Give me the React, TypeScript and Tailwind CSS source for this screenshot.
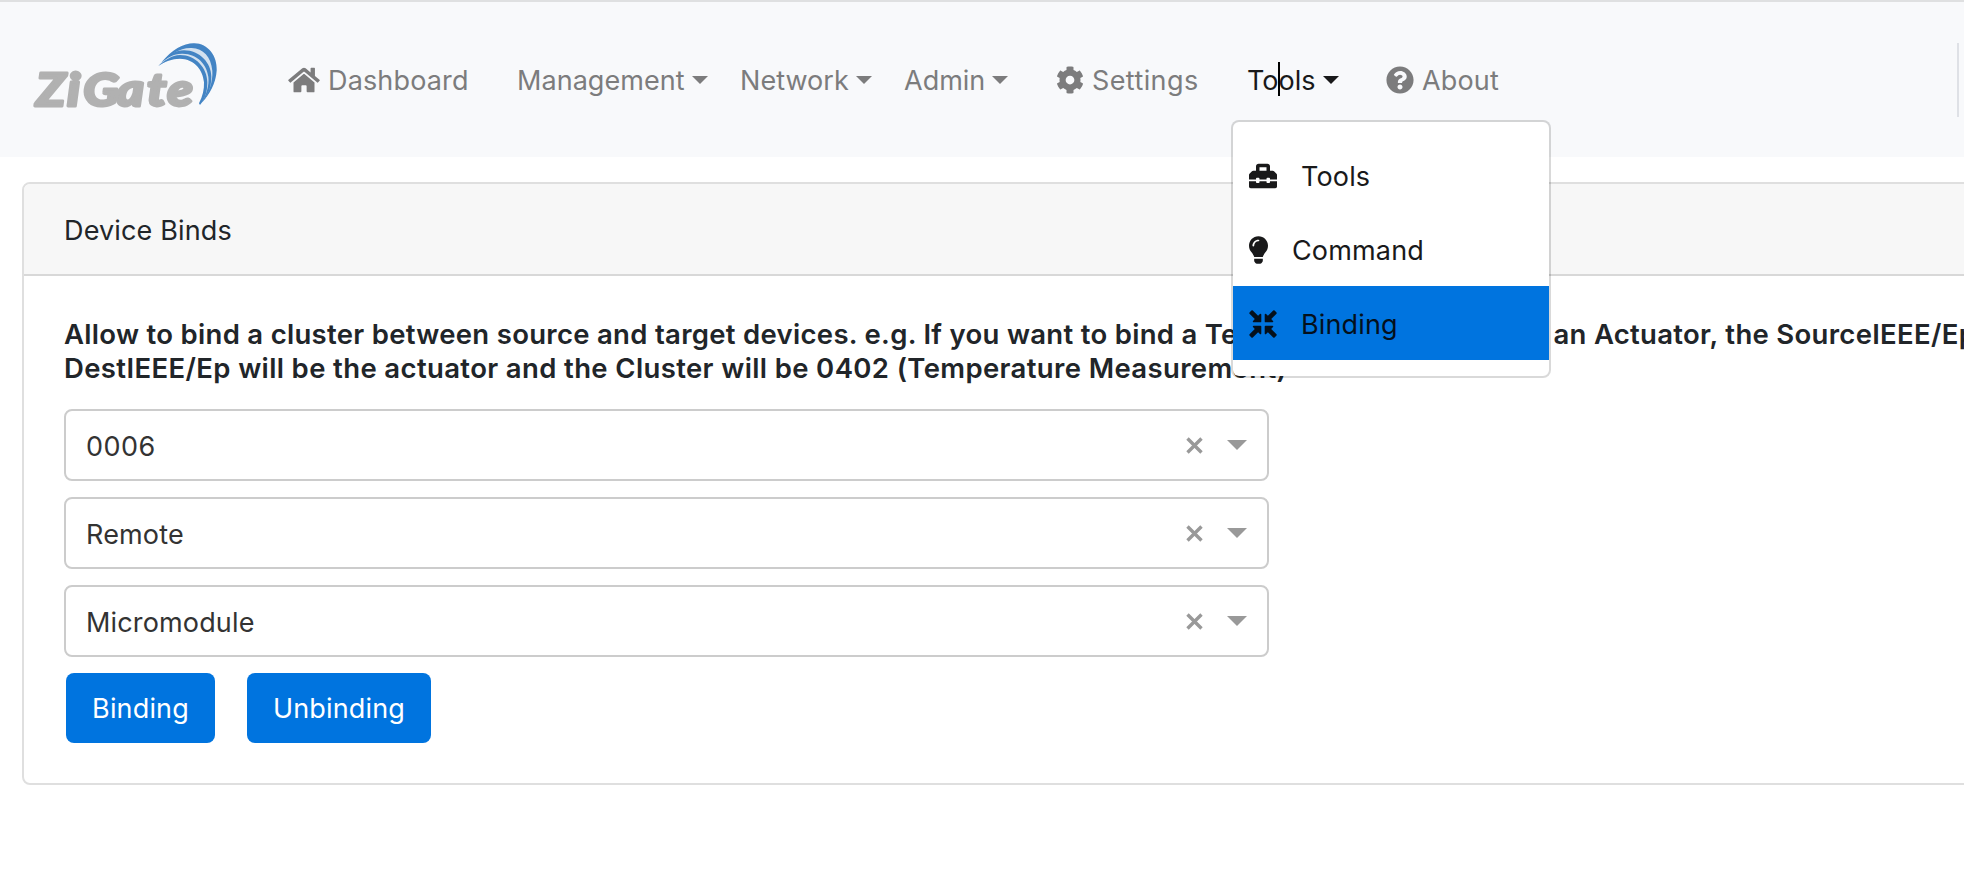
import type { ReactNode } from "react";
import { FaHome, FaCog, FaQuestionCircle, FaToolbox, FaLightbulb } from "react-icons/fa";

function Logo() {
  return (
    <svg className="mr-[66px] block h-[79px] w-[190px] shrink-0" viewBox="32 40 190 79">
      <text
        transform="scale(1.14 1)"
        x="31.6 58.8 73 102.3 129 146.8"
        y="106.5"
        fontSize="46"
        fontWeight="900"
        fontStyle="italic"
        fill="#b1b1b1"
        stroke="#b1b1b1"
        strokeWidth="2.8"
        strokeLinejoin="round"
        className="font-['Lato',sans-serif]"
      >
        ZiGate
      </text>
      <g transform="translate(30 35) scale(0.33333)" fill="#4384c4">
        <path
          opacity="0.2"
          d="M385 92C420 50 455 25 492 25C535 25 562 65 560 105C558 145 535 180 510 208C522 185 527 160 526 140C522 105 495 73 450 71C425 70 405 80 385 92Z"
        />
        <path d="M395 82C425 45 460 25 492 25C535 25 562 65 560 105C558 145 538 180 515 204C537 175 549 140 547 107C543 65 520 41 485 39C450 37 420 60 395 82Z" />
        <path d="M395 82C420 57 437 46 462 46C510 46 544 85 544 125C544 160 532 185 514 204C530 178 538 150 535 125C530 88 503 57 458 56C432 55 412 68 395 82Z" />
        <path d="M385 93C405 75 425 61 450 60C498 60 532 100 532 142C532 172 525 192 510 210L507 205C518 185 523 162 522 142C519 106 495 72 450 71C425 71 405 80 385 93Z" />
      </g>
    </svg>
  );
}

function Caret() {
  return (
    <span className="ml-[7px] mt-px h-0 w-0 shrink-0 border-x-[8px] border-t-[8px] border-x-transparent border-t-current" />
  );
}

function NavItem({ className = "", icon, label, caret }: { className?: string; icon?: ReactNode; label: string; caret?: boolean }) {
  return (
    <a className={`flex shrink-0 items-center whitespace-nowrap ${className}`}>
      {icon}
      <span className="mt-[2px]">{label}</span>
      {caret && <Caret />}
    </a>
  );
}

function MenuItem({ icon, label, className = "" }: { icon: ReactNode; label: string; className?: string }) {
  return (
    <a className={`flex h-[74px] items-center gap-6 pl-4 pt-[2px] ${className}`}>
      {icon}
      <span className="mt-[2px]">{label}</span>
    </a>
  );
}

function Select({ value, className = "" }: { value: string; className?: string }) {
  return (
    <div className="flex h-[72px] w-[1205px] items-center rounded-lg border-2 border-[#ccc] bg-white pl-5 pr-[20px] text-[#333]">
      <span className={`mt-[3px] grow ${className}`}>{value}</span>
      <svg className="mr-[24px] h-[17px] w-[17px]" viewBox="0 0 17 17" stroke="#999" strokeWidth="3.4">
        <path d="M1.5 1.5L15.5 15.5M15.5 1.5L1.5 15.5" />
      </svg>
      <span className="h-0 w-0 border-x-[10px] border-t-[10px] border-x-transparent border-t-[#999]" />
    </div>
  );
}

function CompressIcon() {
  return (
    <svg className="h-7 w-7 shrink-0" viewBox="0 0 28 28" fill="currentColor">
      {["rotate(0 14 14)", "rotate(90 14 14)", "rotate(180 14 14)", "rotate(270 14 14)"].map((turn) => (
        <g key={turn} transform={turn}>
          <path d="M12.3 4.6V11.4Q12.3 12.3 11.4 12.3H4.6Q3.2 12 4 10.9L5.8 9.1L0.5 3.8Q0 3.1 0.5 2.4L2.4 0.5Q3.1 0 3.8 0.5L9.1 5.8L10.9 4Q12 3.2 12.3 4.6Z" />
        </g>
      ))}
    </svg>
  );
}

export default function App() {
  return (
    <div className="h-[892px] w-[1964px] overflow-hidden bg-white font-['Inter',sans-serif] text-[27px] leading-[42px] tracking-[0.15px] text-[#212529]">
      <nav className="flex h-[157px] items-center border-t-2 border-[#dfe0e1] bg-[#f8f9fb] pl-8 text-[#7c7c7d]">
        <Logo />
        <NavItem className="w-[229px]" icon={<FaHome className="mr-2 h-7 w-8" />} label="Dashboard" />
        <NavItem className="w-[223px] tracking-[0.05px]" label="Management" caret />
        <NavItem className="w-[164px] tracking-[0.05px]" label="Network" caret />
        <NavItem className="w-[152px] tracking-normal" label="Admin" caret />
        <NavItem className="w-[191px] tracking-[0.4px]" icon={<FaCog className="mr-2 h-7 w-7" />} label="Settings" />
        <div className="relative w-[139px] tracking-normal text-[#19191a]">
          <NavItem label="Tools" caret />
          <span className="absolute left-[31px] top-[4px] h-[34px] w-[2px] bg-black" />
          <div className="absolute -left-[16px] top-[62px] h-[258px] w-[320px] rounded-lg border-2 border-black/15 bg-white bg-clip-padding pt-4 tracking-[0.15px]">
            <MenuItem icon={<FaToolbox className="h-7 w-7" />} label="Tools" />
            <MenuItem icon={<FaLightbulb className="h-7 w-[19px]" />} label="Command" />
            <MenuItem className="bg-[#0074df] text-[#04101c]" icon={<CompressIcon />} label="Binding" />
          </div>
        </div>
        <NavItem icon={<FaQuestionCircle className="mr-2 h-7 w-7" />} label="About" />
        <span className="ml-auto mr-[5px] h-[74px] w-[2px] bg-[#dfe1e6]" />
      </nav>
      <section className="ml-[22px] mt-[25px] h-[603px] w-[1990px] overflow-hidden rounded-lg border-2 border-[#dfdfdf]">
        <h1 className="flex h-[92px] items-center border-b-2 border-[#d8d8d8] bg-[#f7f7f7] pl-10 pt-[3px]">Device Binds</h1>
        <div className="pl-10 pt-[41px]">
          <p className="mb-[24px] whitespace-nowrap text-[27.5px] font-[570] leading-[34px] tracking-[0.37px]">
            <span className="tracking-[0.3px]">
              Allow to bind a cluster between source and target devices. e.g. If you want to bind a Temperature Sensor with an
              Actuator, the SourceIEEE/Ep
            </span>
            <br />
            DestIEEE/Ep will be the actuator and the Cluster will be 0402 (Temperature Measurement)
          </p>
          <div className="flex flex-col gap-4">
            <Select value="0006" className="tracking-[0.5px]" />
            <Select value="Remote" />
            <Select value="Micromodule" />
          </div>
          <div className="ml-[2px] mt-4 flex gap-8 text-white">
            <button className="h-[70px] w-[149px] rounded-lg bg-[#0074df] pt-[2px]">Binding</button>
            <button className="h-[70px] w-[184px] rounded-lg bg-[#0074df] pt-[2px]">Unbinding</button>
          </div>
        </div>
      </section>
    </div>
  );
}
